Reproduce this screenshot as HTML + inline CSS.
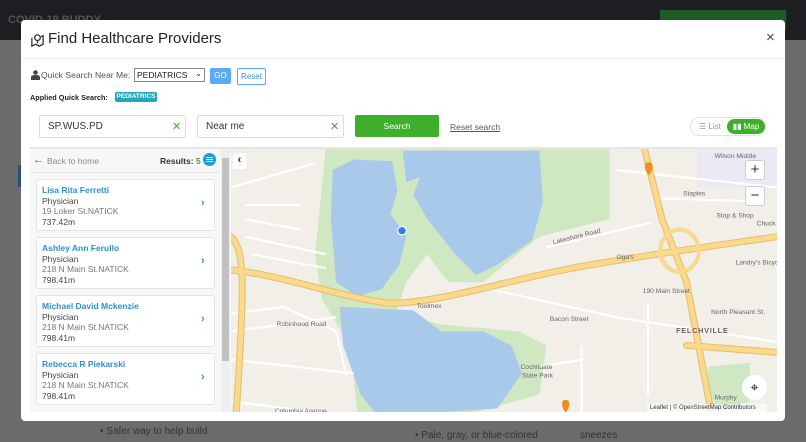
<!DOCTYPE html>
<html><head><meta charset="utf-8"><style>
*{box-sizing:border-box;margin:0;padding:0}
body{width:806px;height:442px;overflow:hidden;position:relative;background:#6b6b6b;font-family:"Liberation Sans",sans-serif}
.abs{position:absolute}
.hdr{left:0;top:0;width:806px;height:40px;background:#1c1e21}
.modal{left:21px;top:20px;width:764px;height:401px;background:#fff;border-radius:4px;overflow:hidden}
.t{position:absolute;white-space:nowrap}
.card{position:absolute;left:6px;width:179px;height:52px;background:#fff;border:1px solid #e4e4e4;border-radius:3px}
.card .n{position:absolute;left:5px;top:5px;font-size:8.5px;font-weight:bold;color:#2e8fd3}
.card .p{position:absolute;left:5px;top:16px;font-size:8.5px;color:#444}
.card .a{position:absolute;left:5px;top:26px;font-size:8.5px;color:#777}
.card .d{position:absolute;left:5px;top:37px;font-size:8.5px;color:#444}
.card .c{position:absolute;left:164px;top:17px;font-size:11px;color:#2e8fd3;font-weight:bold}
.input{position:absolute;height:23px;border:1px solid #ddd;border-radius:2px;background:#fff;font-size:10px;color:#333}
.mbtn{position:absolute;width:20px;height:20px;background:#fff;border:1px solid #ccc;border-radius:3px;text-align:center;font-size:15px;line-height:18px;color:#333}
</style></head><body>
<div class="abs hdr"></div>
<div class="t" style="left:8px;top:14px;font-size:11px;font-weight:bold;color:#555">COVID-19 BUDDY</div>
<div class="abs" style="left:660px;top:10px;width:126px;height:20px;background:#1e5a2a"></div>
<div class="abs" style="left:18px;top:165px;width:6px;height:22px;background:#2c4f7a"></div>
<div class="t" style="left:100px;top:426px;font-size:10px;color:#333">• Safer way to help build</div>
<div class="t" style="left:415px;top:430px;font-size:10px;color:#333">• Pale, gray, or blue-colored</div>
<div class="t" style="left:580px;top:430px;font-size:10px;color:#333">sneezes</div>

<div class="abs modal">
 <svg class="abs" style="left:9px;top:13px" width="15" height="15" viewBox="0 0 16 16" fill="none" stroke="#333" stroke-width="1.4"><path d="M2 5v9l4-2 4 2 4-2V3l-2 1"/><circle cx="8" cy="5" r="3"/><path d="M8 8v3"/></svg>
 <div class="t" style="left:27px;top:10px;font-size:15px;color:#222">Find Healthcare Providers</div>
 <div class="t" style="left:745px;top:9px;font-size:15px;color:#444">×</div>
 <div class="abs" style="left:0;top:38px;width:764px;height:1px;background:#eee"></div>

 <svg class="abs" style="left:10px;top:50px" width="9" height="10" viewBox="0 0 9 10"><circle cx="4.5" cy="2.5" r="2.3" fill="#444"/><path d="M0 10V7q0-2 4.5-2T9 7v3z" fill="#444"/></svg>
 <div class="t" style="left:20px;top:50px;font-size:8.6px;color:#555">Quick Search Near Me:</div>
 <div class="abs" style="left:113px;top:48px;width:71px;height:14px;border:1px solid #888;font-size:8.5px;padding-left:2px;line-height:12px;color:#222">PEDIATRICS<span style="position:absolute;right:2px;top:-1px;font-size:8px">⌄</span></div>
 <div class="abs" style="left:189px;top:48px;width:21px;height:16px;background:#5aabf7;border-radius:2px;color:#fff;font-size:8px;text-align:center;line-height:16px">GO</div>
 <div class="abs" style="left:216px;top:48px;width:29px;height:17px;border:1px solid #5aabf7;border-radius:2px;color:#3a8ed8;font-size:8px;text-align:center;line-height:15px">Reset</div>
 <div class="t" style="left:9px;top:73px;font-size:7.3px;font-weight:bold;color:#222">Applied Quick Search:</div>
 <div class="abs" style="left:94px;top:72px;width:42px;height:10px;background:#1fa7bd;border-radius:2px;color:#fff;font-size:6.5px;font-weight:bold;text-align:center;line-height:10px">PEDIATRICS</div>

 <div class="input" style="left:18px;top:95px;width:147px"><span class="t" style="left:8px;top:5px">SP.WUS.PD</span><span class="t" style="left:132px;top:4px;color:#3fae2a;font-size:11px">✕</span></div>
 <div class="input" style="left:176px;top:95px;width:147px"><span class="t" style="left:8px;top:5px">Near me</span><span class="t" style="left:132px;top:4px;color:#3fae2a;font-size:11px">✕</span></div>
 <div class="abs" style="left:334px;top:95px;width:84px;height:22px;background:#3fae2a;border-radius:2px;color:#fff;font-size:8.5px;text-align:center;line-height:22px">Search</div>
 <div class="t" style="left:429px;top:102px;font-size:8.5px;color:#555;text-decoration:underline">Reset search</div>
 <div class="abs" style="left:669px;top:97px;width:76px;height:19px;border:1px solid #e2e2e2;border-radius:10px;background:#fff"></div>
 <div class="t" style="left:678px;top:102px;font-size:8px;color:#999">☰ List</div>
 <div class="abs" style="left:706px;top:99px;width:38px;height:15px;background:#3fae2a;border-radius:8px;color:#fff;font-size:8px;text-align:center;line-height:15px">▮▮ Map</div>

 <div class="abs" style="left:9px;top:127px;width:747px;height:2px;background:#e6e6e6"></div>
 <div class="abs" style="left:9px;top:129px;width:201px;height:263px;background:#f7f7f7;overflow:hidden">
  <div class="t" style="left:3px;top:5px;font-size:11px;color:#555">←</div>
  <div class="t" style="left:17px;top:7px;font-size:8.5px;color:#888">Back to home</div>
  <div class="t" style="left:130px;top:7px;font-size:8.5px;color:#333;font-weight:bold">Results: <span style="color:#3fae2a">5</span></div>
  <div class="abs" style="left:173px;top:4px;width:13px;height:13px;border-radius:50%;background:#1b9be2"></div>
  <div class="abs" style="left:176px;top:8px;width:7px;height:1px;background:#fff;box-shadow:0 2px #fff,0 4px #fff"></div>
  <div class="abs" style="left:0;top:23px;width:190px;height:1px;background:#e6e6e6"></div>
  <div class="card" style="top:30px"><div class="n">Lisa Rita Ferretti</div><div class="p">Physician</div><div class="a">19 Loker St.NATICK</div><div class="d">737.42m</div><div class="c">›</div></div>
  <div class="card" style="top:88px"><div class="n">Ashley Ann Ferullo</div><div class="p">Physician</div><div class="a">218 N Main St.NATICK</div><div class="d">798.41m</div><div class="c">›</div></div>
  <div class="card" style="top:146px"><div class="n">Michael David Mckenzie</div><div class="p">Physician</div><div class="a">218 N Main St.NATICK</div><div class="d">798.41m</div><div class="c">›</div></div>
  <div class="card" style="top:204px"><div class="n">Rebecca R Piekarski</div><div class="p">Physician</div><div class="a">218 N Main St.NATICK</div><div class="d">798.41m</div><div class="c">›</div></div>
  <div class="abs" style="left:191px;top:0;width:9px;height:263px;background:#eee"></div>
  <div class="abs" style="left:192px;top:9px;width:7px;height:203px;background:#c1c1c1"></div>
 </div>

 <svg class="abs" style="left:210px;top:129px" width="546" height="263" viewBox="0 0 1558 750" preserveAspectRatio="none">
  <rect width="1558" height="750" fill="#f2efe9"/>
  <rect x="1330" y="0" width="228" height="110" fill="#ece8f4"/>
  <path d="M270 0L900 0L1080 0L1080 200L880 250L780 330L720 380L620 380L560 300L500 380L470 470L600 500L820 520L900 560L880 700L700 750L360 750L340 560L260 430L240 300L260 100Z" fill="#cfe8c2"/>
  <path d="M1360 620L1480 610L1480 720L1400 740L1360 700Z" fill="#cfe8c2"/>
  <path d="M290 60L350 30L460 35L475 120L455 185L500 250L480 330L430 400L360 420L300 380L285 200Z" fill="#a9c9ea"/>
  <path d="M490 5L880 5L890 150L860 260L760 330L700 360L640 300L560 200L520 130L540 80L500 95Z" fill="#a9c9ea"/>
  <path d="M310 450L520 460L600 520L720 520L800 560L830 640L760 740L600 750L410 750L370 700L320 560Z" fill="#a9c9ea"/>
  <g fill="none" stroke="#fff" stroke-width="6">
   <path d="M0 110L240 40M40 160L200 160M40 200L200 230M40 250L270 300M60 300L270 340"/>
   <path d="M900 280L1200 210M1100 60L1560 110M1200 140L1520 150"/>
   <path d="M740 400L1100 480L1558 550M1000 560L1000 750M1190 440L1190 700M0 520L300 480M0 600L350 640M0 720L320 760M880 620L1010 600"/>
   <path d="M0 470L150 450L300 520L330 650"/>
  </g>
  <g fill="none" stroke="#e8bf6a" stroke-width="20" stroke-linecap="round">
   <path d="M0 345C150 360 300 420 450 440C600 440 800 370 1000 335C1200 300 1350 280 1558 250"/>
   <path d="M1180 0L1230 200L1300 380L1370 750"/>
   <path d="M0 250C40 290 40 380 15 750"/>
   <path d="M1300 560L1558 580"/>
  </g>
  <g fill="none" stroke="#f8d98e" stroke-width="14" stroke-linecap="round">
   <path d="M0 345C150 360 300 420 450 440C600 440 800 370 1000 335C1200 300 1350 280 1558 250"/>
   <path d="M1180 0L1230 200L1300 380L1370 750"/>
   <path d="M0 250C40 290 40 380 15 750"/>
   <path d="M1300 560L1558 580"/>
  </g>
  <ellipse cx="1280" cy="290" rx="55" ry="60" fill="none" stroke="#f8d98e" stroke-width="12"/>
  <circle cx="488" cy="233" r="12" fill="#2f7fe8" stroke="#fff" stroke-width="3"/>
  <path d="M1192 75C1176 55 1178 38 1192 38C1206 38 1208 55 1192 75Z" fill="#f28c1c"/>
  <path d="M955 752C940 732 942 715 955 715C968 715 970 732 955 752Z" fill="#f28c1c"/>
  <g font-family="Liberation Sans" font-size="19" fill="#666">
   <text x="1380" y="25">Wilson Middle</text><text x="1290" y="133">Staples</text><text x="1385" y="195">Stop &amp; Shop</text>
   <text x="1100" y="313">Oga's</text><text x="1440" y="330">Landry's Bicyc</text><text x="1175" y="410">190 Main Street</text>
   <text x="530" y="453">Toolmex</text><text x="1370" y="470">North Pleasant St.</text><text x="910" y="490">Bacon Street</text>
   <text x="826" y="627">Cochituate</text><text x="830" y="652">State Park</text><text x="125" y="753">Columbia Avenue</text>
   <text x="920" y="272" transform="rotate(-14 920 272)">Lakeshore Road</text><text x="130" y="505">Robinhood Road</text>
   <text x="1380" y="714">Murphy</text><text x="1366" y="738">Playgroun</text><text x="1500" y="218">Chuck</text>
  </g>
  <text x="1270" y="525" font-family="Liberation Sans" font-size="21" font-weight="bold" fill="#7a5a6a" letter-spacing="2">FELCHVILLE</text>
 </svg>
 <div class="abs" style="left:212px;top:133px;width:13px;height:16px;background:#fff;border-radius:2px;font-size:11px;font-weight:bold;text-align:center;line-height:15px;color:#222">‹</div>
 <div class="mbtn" style="left:724px;top:140px">+</div>
 <div class="mbtn" style="left:724px;top:166px">−</div>
 <div class="abs" style="left:721px;top:355px;width:25px;height:25px;border-radius:50%;background:#fff;text-align:center;line-height:25px;font-size:14px;color:#111">⌖</div>
 <div class="abs" style="left:626px;top:384px;width:120px;height:9px;background:rgba(255,255,255,.7);font-size:6px;color:#333;line-height:9px;padding-left:3px;white-space:nowrap">Leaflet | © OpenStreetMap Contributors</div>
</div>
</body></html>
